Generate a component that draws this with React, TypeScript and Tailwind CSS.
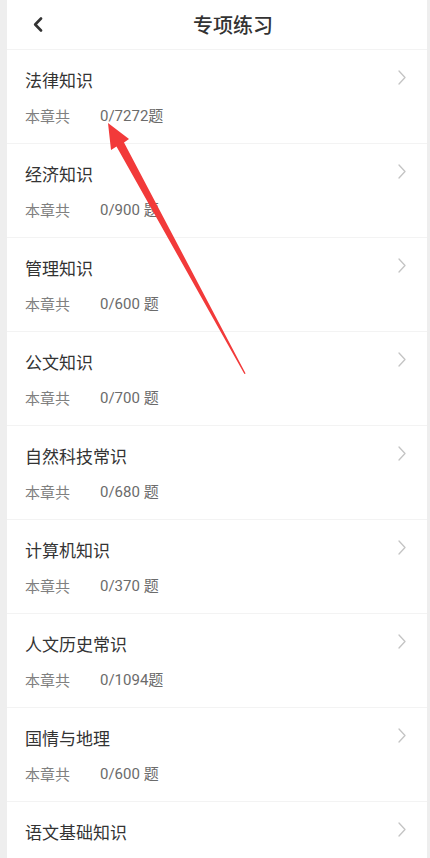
import React from 'react';

interface Chapter {
  name: string;
  count: string;
}

const chapters: Chapter[] = [
  { name: '法律知识', count: '0/7272题' },
  { name: '经济知识', count: '0/900 题' },
  { name: '管理知识', count: '0/600 题' },
  { name: '公文知识', count: '0/700 题' },
  { name: '自然科技常识', count: '0/680 题' },
  { name: '计算机知识', count: '0/370 题' },
  { name: '人文历史常识', count: '0/1094题' },
  { name: '国情与地理', count: '0/600 题' },
  { name: '语文基础知识', count: '0/520 题' },
];

const font = { fontFamily: '"Noto Sans CJK SC", "Noto Sans", sans-serif' };
const numFont = { fontFamily: 'Roboto, "Noto Sans CJK SC", sans-serif' };

const ChapterRow: React.FC<{ chapter: Chapter }> = ({ chapter }) => (
  <div className="relative h-[94px] shrink-0 border-b border-[#f3f3f3] px-[18px] pt-[18px]">
    <div className="text-[17px] leading-[24px] text-[#333333]">{chapter.name}</div>
    <div className="mt-[14px] flex text-[15px] leading-[20px]">
      <span className="w-[75px] text-[#808080]">本章共</span>
      <span className="text-[#6b6b6b]" style={numFont}>{chapter.count}</span>
    </div>
    <svg className="absolute right-[21px] top-[20px]" width="8" height="15" viewBox="0 0 8 15" fill="none">
      <path d="M1 1L7 7.5L1 14" stroke="#c4c4c4" strokeWidth="1.3" strokeLinecap="round" strokeLinejoin="round" />
    </svg>
  </div>
);

export default function App() {
  return (
    <div className="relative h-[858px] overflow-hidden bg-[#eeeeee]" style={font}>
      <div className="ml-[7px] flex h-full w-[420px] flex-col bg-white">
        {/* Header */}
        <div className="flex h-[50px] shrink-0 items-center border-b border-[#f3f3f3]">
          <div className="flex w-[52px] pl-[26px]">
            <svg width="10" height="15" viewBox="0 0 10 15" fill="none">
              <path d="M8 1.5L2.2 7.5L8 13.5" stroke="#333333" strokeWidth="2.6" strokeLinecap="round" strokeLinejoin="round" />
            </svg>
          </div>
          <div className="flex-1 text-center text-[20px] font-medium leading-[28px] text-[#333333]">专项练习</div>
          <div className="w-[20px]" />
        </div>

        {chapters.map((c) => (
          <ChapterRow key={c.name} chapter={c} />
        ))}
      </div>

      {/* red annotation arrow */}
      <svg className="pointer-events-none absolute left-0 top-0" width="430" height="858" viewBox="0 0 430 858">
        <polygon
          points="108,123 129,139 124,142.5 245.6,373.5 244.4,374 116.5,146.5 111,150"
          fill="#f23a3a"
        />
      </svg>
    </div>
  );
}
